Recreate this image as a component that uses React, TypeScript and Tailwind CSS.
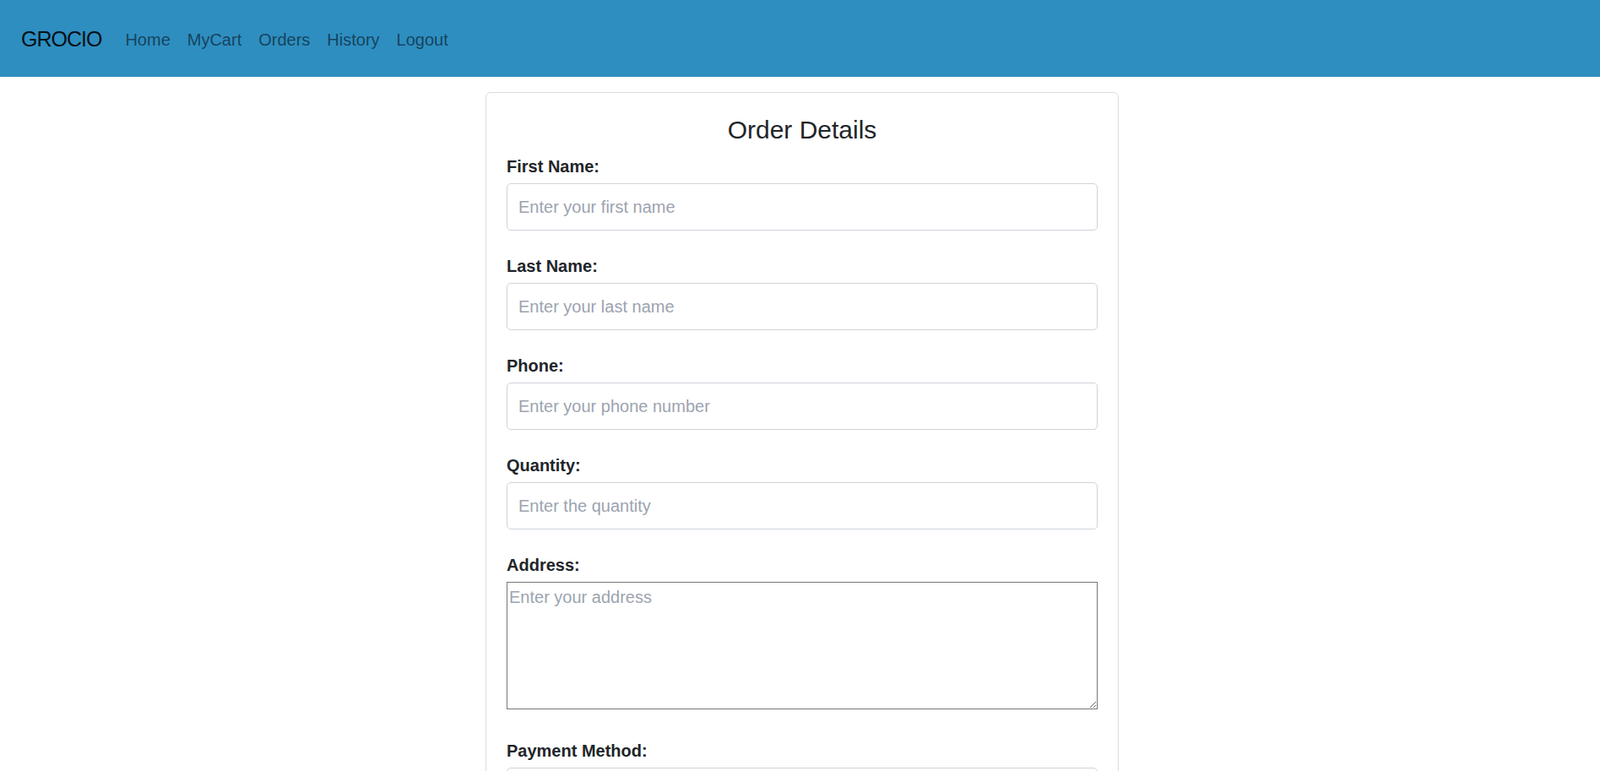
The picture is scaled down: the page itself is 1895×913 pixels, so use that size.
import React from "react";

const fields = [
  { label: "First Name:", placeholder: "Enter your first name" },
  { label: "Last Name:", placeholder: "Enter your last name" },
  { label: "Phone:", placeholder: "Enter your phone number" },
  { label: "Quantity:", placeholder: "Enter the quantity" },
];

export default function App() {
  return (
    <div className="min-h-screen bg-white text-[#212529] font-['Liberation_Sans',Arial,sans-serif]">
      <nav className="h-[91px] bg-[#2e8ec0] flex items-center pt-[2px] pl-[25px]">
        <a className="text-[25px] leading-[37.5px] tracking-[-1px] text-black/90 mr-[18px]">GROCIO</a>
        <ul className="flex items-center">
          {["Home", "MyCart", "Orders", "History", "Logout"].map((l) => (
            <li key={l}>
              <a className="block px-[10px] text-[20px] leading-[30px] text-black/55">{l}</a>
            </li>
          ))}
        </ul>
      </nav>

      <div className="pl-[5px]">
        <div className="w-[750px] mx-auto mt-[18px] border border-[#dcdcdc] rounded-[6px] px-[24px] pt-[26px] pb-[24px]">
          <h4 className="text-[30px] leading-[36px] text-center mb-[10px] font-medium">Order Details</h4>
          <form>
            {fields.map((f) => (
              <div key={f.label} className="mb-[27px]">
                <label className="block text-[20px] leading-[30px] font-bold mb-[5px]">{f.label}</label>
                <input
                  className="block w-full h-[56px] border border-[#ced4da] rounded-[5px] px-[13px] text-[20px] outline-none placeholder:text-[#9ca3af]"
                  placeholder={f.placeholder}
                />
              </div>
            ))}
            <div className="mb-[34px]">
              <label className="block text-[20px] leading-[30px] font-bold mb-[5px]">Address:</label>
              <textarea
                className="block w-full h-[151px] border border-[#767676] p-[2px] text-[20px] leading-[30px] outline-none placeholder:text-[#9ca3af]"
                placeholder="Enter your address"
              />
            </div>
            <div className="mb-[27px]">
              <label className="block text-[20px] leading-[30px] font-bold mb-[5px]">Payment Method:</label>
              <select className="block w-full h-[56px] border border-[#ced4da] rounded-[5px] px-[13px] text-[20px] outline-none bg-white">
                <option>Select payment method</option>
                <option>Cash on Delivery</option>
                <option>Card</option>
              </select>
            </div>
            <button
              type="button"
              className="px-[15px] py-[8px] text-[20px] rounded-[5px] bg-[#0d6efd] text-white"
            >
              Submit
            </button>
          </form>
        </div>
      </div>
    </div>
  );
}
